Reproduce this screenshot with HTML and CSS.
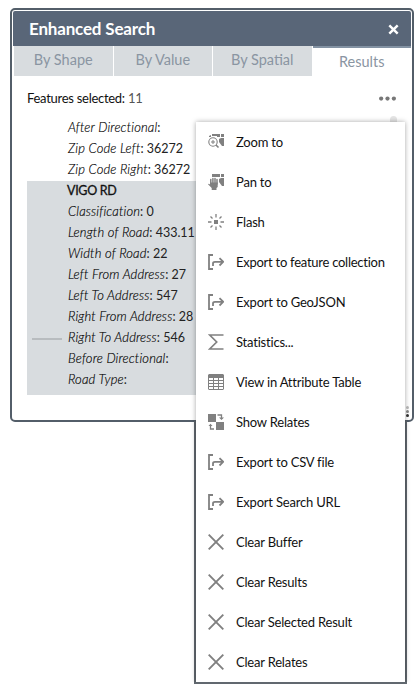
FILE: index.html
```html
<!DOCTYPE html>
<html lang="en">
<head>
<meta charset="utf-8">
<title>Enhanced Search</title>
<link rel="stylesheet" href="styles.css">
</head>
<body>
<svg width="0" height="0" class="defs">
  <symbol id="zoom" viewBox="0 0 16 16"><path d="M4 0h8v3H9V2H4zM13 0h3v3h-3zM11 5l2-1h3v8h-2l-3-4zM1 2l2-1v2H1z" fill="currentColor"/><circle cx="5" cy="8" r="4.2" fill="#fff" stroke="currentColor" stroke-width="1.1"/><path d="M3 8h4M5 6v4" stroke="currentColor" fill="none"/><path d="M8 11l2.500 2.500" stroke="currentColor" stroke-width="1.600"/></symbol>
  <symbol id="pan" viewBox="0 0 16 16"><path d="M4 0h8v3H4zM13 0h3v3h-3zM11 5l2-1h3v8h-2l-3-4z" fill="currentColor"/><path d="M2.800 10V5.500M4.900 9V4.500M7 9V4.500M9 10V5.500" stroke="currentColor" stroke-width="1.500" stroke-linecap="round"/><path d="M2 8.500h7.700V13L8.500 14v2H3.700v-2L0 10.200q.5-1 2 .2z" fill="currentColor"/></symbol>
  <symbol id="flash" viewBox="0 0 16 16"><path d="M6 6h4v4H6z" fill="currentColor"/><path d="M8 0v3.500M8 12.500V16M0 8h3.500M12.500 8H16M2.500 2.500l2 2M11.500 11.500l2 2M13.500 2.500l-2 2M4.500 11.500l-2 2" stroke="currentColor" stroke-width="1.300"/></symbol>
  <symbol id="export" viewBox="0 0 16 16"><path d="M5 1H1v14h4M5 12V9.500Q5 7.800 7 7.800h8M11.500 4.200L15.200 7.800l-3.700 3.700" fill="none" stroke="currentColor" stroke-width="1.800"/></symbol>
  <symbol id="sum" viewBox="0 0 16 16"><path d="M15.500 1H1.700l7 7-7 7h13.800" fill="none" stroke="currentColor" stroke-width="1.700"/></symbol>
  <symbol id="table" viewBox="0 0 16 16"><path fill-rule="evenodd" d="M1 0h14l1 1v14l-1 1H1l-1-1V1zM1 4v2h4V4zM6 4v2h4V4zM11 4v2h4V4zM1 7v2h4V7zM6 7v2h4V7zM11 7v2h4V7zM1 10v2h4v-2zM6 10v2h4v-2zM11 10v2h4v-2zM1 13v2h4v-2zM6 13v2h4v-2zM11 13v2h4v-2z" fill="currentColor"/></symbol>
  <symbol id="relate" viewBox="0 0 16 16"><path d="M0 0h8v8H0zM8 8h8v8H8zM11 3.500h5L13.500 6zM.5 12h4L2.500 9.700z" fill="currentColor"/><path d="M9.500 1h4v3M2.500 11.500v3.500H6" fill="none" stroke="currentColor" stroke-width="1.300"/></symbol>
  <symbol id="x" viewBox="0 0 16 16"><path d="M.7.7l14.600 14.600M15.300.7L.7 15.300" fill="none" stroke="currentColor" stroke-width="1.900"/></symbol>
</svg>
<main class="panel">
  <header class="title"><h1>Enhanced Search</h1><svg class="close" viewBox="0 0 10 10"><path d="M1.200 1.200l7.600 7.600M8.800 1.200L1.200 8.800"/></svg></header>
  <nav class="tabs"><span>By Shape</span><span>By Value</span><span>By Spatial</span><span class="active">Results</span></nav>
  <div class="summary"><span>Features selected: <b>11</b></span><svg class="more" viewBox="0 0 16 4"><circle cx="2" cy="2" r="2"/><circle cx="8" cy="2" r="2"/><circle cx="14" cy="2" r="2"/></svg></div>
  <section class="results">
    <div class="feature">
      <p><i>After Directional</i>:</p>
      <p><i>Zip Code Left</i>: 36272</p>
      <p><i>Zip Code Right</i>: 36272</p>
    </div>
    <div class="feature selected">
      <p class="name">VIGO RD</p>
      <p><i>Classification</i>: 0</p>
      <p><i>Length of Road</i>: 433.11</p>
      <p><i>Width of Road</i>: 22</p>
      <p><i>Left From Address</i>: 27</p>
      <p><i>Left To Address</i>: 547</p>
      <p><i>Right From Address</i>: 28</p>
      <p class="marked"><i>Right To Address</i>: 546</p>
      <p><i>Before Directional</i>:</p>
      <p><i>Road Type</i>:</p>
    </div>
  </section>
  <div class="scroll"></div>
  <div class="grip"><s></s><s></s><s></s></div>
</main>
<div class="menu-frame"></div>
<ul class="menu">
  <li><svg><use href="#zoom"/></svg><span>Zoom to</span></li>
  <li><svg><use href="#pan"/></svg><span>Pan to</span></li>
  <li><svg><use href="#flash"/></svg><span>Flash</span></li>
  <li><svg><use href="#export"/></svg><span class="long">Export to feature collection</span></li>
  <li><svg><use href="#export"/></svg><span>Export to GeoJSON</span></li>
  <li><svg><use href="#sum"/></svg><span>Statistics...</span></li>
  <li><svg><use href="#table"/></svg><span>View in Attribute Table</span></li>
  <li><svg><use href="#relate"/></svg><span>Show Relates</span></li>
  <li><svg><use href="#export"/></svg><span>Export to CSV file</span></li>
  <li><svg><use href="#export"/></svg><span>Export Search URL</span></li>
  <li><svg><use href="#x"/></svg><span>Clear Buffer</span></li>
  <li><svg><use href="#x"/></svg><span>Clear Results</span></li>
  <li><svg><use href="#x"/></svg><span>Clear Selected Result</span></li>
  <li><svg><use href="#x"/></svg><span>Clear Relates</span></li>
</ul>
</body>
</html>
```
FILE: styles.css
```css
* { box-sizing: border-box; }
body { margin: 0; height: 690px; overflow: hidden; background: #fff; position: relative; font-family: Lato, sans-serif; font-size: 13px; color: #111; padding: 8px 0 0 10px; }
.defs { position: absolute; }
h1, p, ul { margin: 0; padding: 0; }
.panel { position: relative; width: 404px; height: 414px; border: 2px solid #535e69; border-radius: 5px; padding: 1px; }
.title { height: 35px; background: #596678; color: #fff; display: flex; align-items: center; justify-content: space-between; padding: 1px 12px 0 16px; border-radius: 2px 2px 0 0; }
h1 { font-size: 17px; font-weight: 700; line-height: 22px; letter-spacing: -.18px; }
.close { width: 11px; height: 11px; stroke: #fff; stroke-width: 2.200; fill: none; }
.tabs { height: 30px; display: grid; grid-template-columns: repeat(4, 1fr); column-gap: 1px; padding-left: 1px; }
.tabs span { background: #d8dcdf; color: #8a95a2; font-size: 14.500px; line-height: 27px; text-align: center; }
.tabs .active { background: #fff; border-top: 2px solid #8392a3; }
.summary { height: 42px; padding: 1px 15px 0 14px; display: flex; align-items: center; justify-content: space-between; }
.summary span { letter-spacing: -.28px; }
.summary b { font-weight: 400; color: #555; }
.more { width: 17px; height: 5px; fill: #777; position: relative; top: 1px; }
.results { margin: 0 14px; }
.feature { padding-left: 41px; line-height: 21px; font-size: 12.500px; letter-spacing: 0; color: #222; }
.feature p { position: relative; top: -1px; }
.feature i { font-size: 13px; font-weight: 300; color: #000; letter-spacing: .15px; -webkit-text-stroke: .15px #000; }
.feature:first-child p, .feature .marked { top: -1px; }
.selected { background: #d8dcdf; height: 214px; }
.feature .name { top: -1px; font-size: 12.500px; letter-spacing: -.3px; left: -1px; color: #111; -webkit-text-stroke: .3px #111; }
.marked::before { content: ""; position: absolute; left: -36px; top: 11px; width: 30px; height: 2px; background: #b8bcbf; }
.scroll { position: absolute; right: 15px; top: 106px; width: 7px; height: 250px; background: #e5e5e5; border-radius: 4px; }
.grip { position: absolute; right: 3px; bottom: 3px; width: 3px; height: 11px; display: flex; flex-direction: column; justify-content: space-between; }
.grip s { height: 3px; border-radius: 50%; background: #333; }
.grip s:first-child { background: #bbb; }
.grip s:nth-child(2) { background: #888; }
.menu-frame { position: absolute; left: 194px; top: 420px; width: 213px; height: 264px; border: 2px solid #61686f; border-top: 0; border-radius: 2px 2px 0 0; }
.menu { position: absolute; left: 196px; top: 122px; width: 209px; height: 560px; background: #fff; list-style: none; box-shadow: 0 0 5px rgba(0,0,0,.35); clip-path: inset(-6px -6px 0 -6px); }
.menu li { height: 40px; display: flex; align-items: center; gap: 12px; padding-left: 12px; font-size: 13px; color: #111; letter-spacing: -.2px; }
.menu .long { letter-spacing: -.26px; }
.menu svg { width: 16px; height: 16px; color: #808080; flex: none; }
```
